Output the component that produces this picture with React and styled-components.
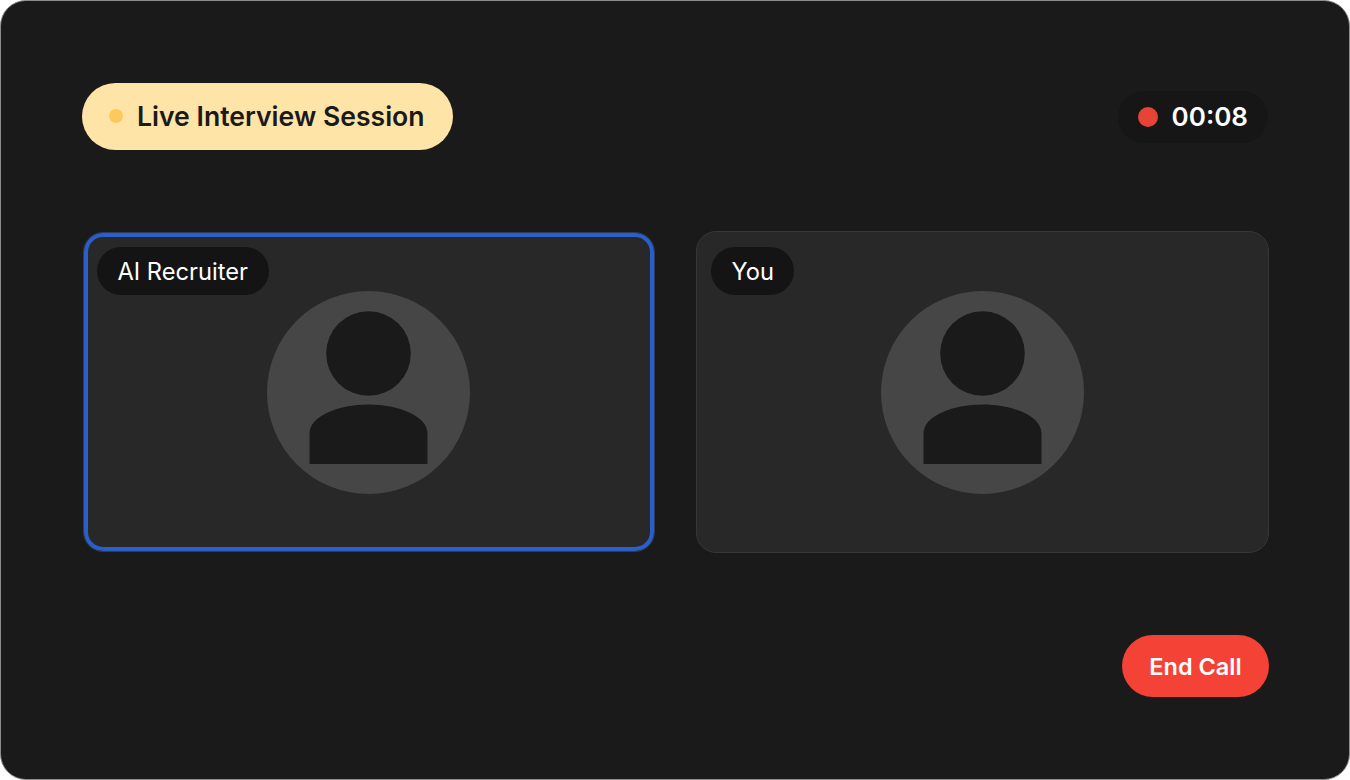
import React from "react";
import styled, { createGlobalStyle } from "styled-components";

const Global = createGlobalStyle`
  html, body { margin: 0; padding: 0; background: #fff; }
  * { box-sizing: border-box; }
`;

const Frame = styled.main`
  width: 1350px;
  height: 780px;
  background: #1a1a1a;
  border: 1px solid #8c8c8c;
  border-radius: 26px;
  padding: 82px 80px 82px 81px;
  display: flex;
  flex-direction: column;
  font-family: Inter, "Liberation Sans", sans-serif;
  overflow: hidden;
`;

const Header = styled.header`
  display: flex;
  align-items: center;
  justify-content: space-between;
  height: 67px;
`;

const LiveBadge = styled.div`
  display: flex;
  align-items: center;
  gap: 14px;
  height: 67px;
  width: 371px;
  padding-left: 27px;
  padding-bottom: 1px;
  border-radius: 34px;
  background: #ffe4a8;
  color: #1a1a1a;
  font-size: 26.6px;
  font-weight: 600;
`;

const LiveDot = styled.span`
  width: 14px;
  height: 14px;
  border-radius: 50%;
  background: #ffc85c;
`;

const Timer = styled.div`
  display: flex;
  align-items: center;
  gap: 14px;
  height: 52px;
  margin-right: 1px;
  padding: 0 20px;
  border-radius: 26px;
  background: #161616;
  color: #fff;
  font-size: 26px;
  font-weight: 600;
`;

const RecDot = styled.span`
  width: 20px;
  height: 20px;
  border-radius: 50%;
  background: #e74336;
`;

const Stage = styled.section`
  display: grid;
  grid-template-columns: 573px 573px;
  column-gap: 41px;
  margin-top: 81px;
`;

const Tile = styled.article`
  position: relative;
  height: ${(p) => (p.$active ? "320px" : "322px")};
  margin: ${(p) => (p.$active ? "1px 0 1px 1px" : "0")};
  padding: ${(p) => (p.$active ? "1px 1px 0 0" : "1px 0 0")};
  border-radius: 20px;
  background: #282828;
  border: 1px solid ${(p) => (p.$active ? "#2c3b5c" : "#363636")};
  box-shadow: ${(p) => (p.$active ? "inset 0 0 0 4px #2a5ec8" : "none")};
  display: flex;
  align-items: center;
  justify-content: center;
`;

const NameTag = styled.span`
  position: absolute;
  top: ${(p) => (p.$active ? "14px" : "15px")};
  left: ${(p) => (p.$active ? "13px" : "14px")};
  display: flex;
  align-items: center;
  height: 48px;
  padding: 0 20.5px;
  border-radius: 24px;
  background: #141414;
  color: #fff;
  font-size: 23.7px;
  font-weight: 400;
`;

const AvatarSvg = styled.svg`
  display: block;
  width: 203px;
  height: 203px;
`;

const Avatar = () => (
  <AvatarSvg viewBox="0 0 203 203" aria-hidden="true">
    <circle cx="101.5" cy="101.5" r="101.5" fill="#464646" />
    <circle cx="101.5" cy="62.5" r="42.3" fill="#1a1a1a" />
    <path d="M42.5 173V142.5C42.5 125 71.5 113.5 101.5 113.5S160.5 125 160.5 142.5V173Z" fill="#1a1a1a" />
  </AvatarSvg>
);

const Footer = styled.footer`
  display: flex;
  justify-content: flex-end;
  margin-top: 82px;
`;

const EndCall = styled.button`
  width: 147px;
  height: 62px;
  border: 0;
  border-radius: 31px;
  background: #f44336;
  color: #fff;
  font-family: inherit;
  font-size: 23.5px;
  font-weight: 600;
`;

export default function App() {
  return (
    <>
      <Global />
      <Frame>
        <Header>
          <LiveBadge>
            <LiveDot />
            Live Interview Session
          </LiveBadge>
          <Timer>
            <RecDot />
            00:08
          </Timer>
        </Header>
        <Stage>
          <Tile $active>
            <NameTag $active>AI Recruiter</NameTag>
            <Avatar />
          </Tile>
          <Tile>
            <NameTag>You</NameTag>
            <Avatar />
          </Tile>
        </Stage>
        <Footer>
          <EndCall>End Call</EndCall>
        </Footer>
      </Frame>
    </>
  );
}
